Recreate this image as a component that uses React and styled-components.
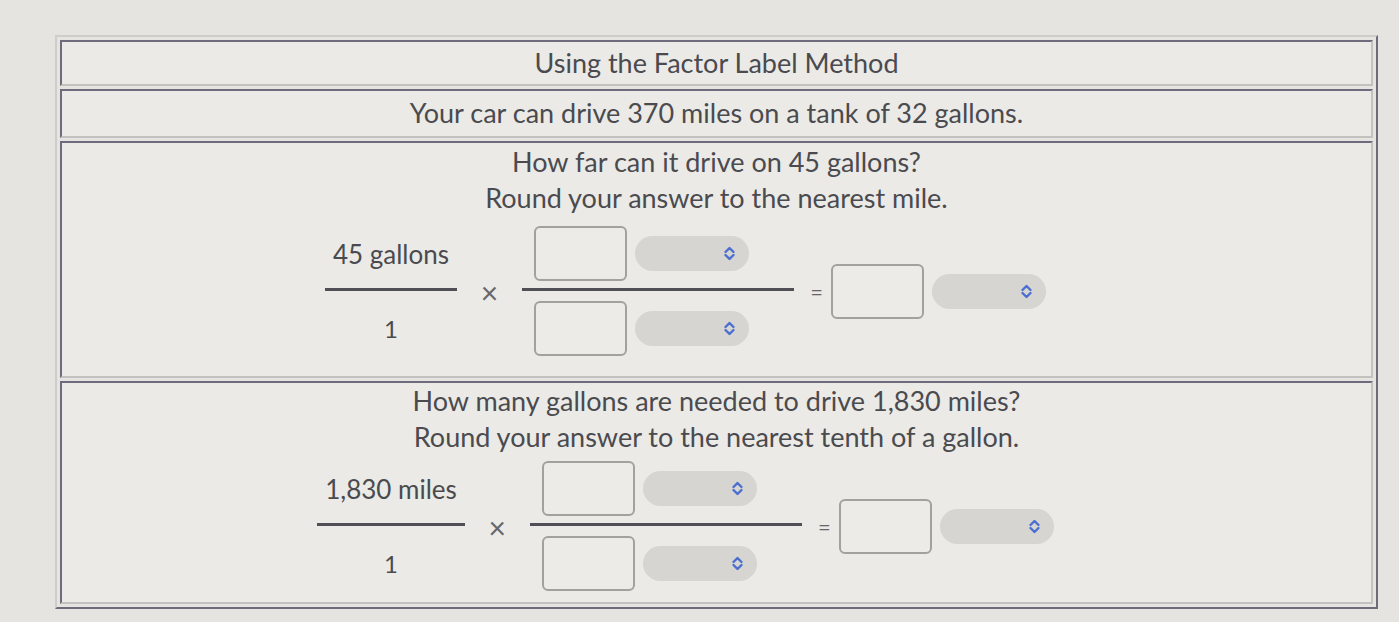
import React from "react";
import styled, { createGlobalStyle } from "styled-components";

const Global = createGlobalStyle`
  html, body { margin: 0; padding: 0; background: #e6e4e0; }
  body { font-family: Lato, "Open Sans", sans-serif; color: #4a4a4f; }
  #root { height: 622px; overflow: hidden; }
`;

const Page = styled.div`
  padding: 35px 21px 0 55px;
`;

const Table = styled.div`
  display: flex;
  flex-direction: column;
  gap: 3px;
  padding: 3px;
  border-style: solid;
  border-width: 2px;
  border-color: #cfcdc9 #6e6a78 #6e6a78 #cfcdc9;
`;

const Cell = styled.div`
  background: #ebeae6;
  border-style: solid;
  border-width: 2px;
  border-color: #6f6b7c #c4c2be #c4c2be #6f6b7c;
  display: flex;
  flex-direction: column;
  align-items: center;
  height: ${(p) => p.$h}px;
  box-sizing: border-box;
  padding-top: ${(p) => p.$pt || 0}px;
`;

const Line = styled.div`
  font-size: 27px;
  line-height: ${(p) => p.$lh || 36}px;
  text-align: center;
  white-space: nowrap;
`;

const Formula = styled.div`
  align-self: stretch;
  display: flex;
  justify-content: center;
  align-items: center;
  padding-right: 62px;
  margin-top: ${(p) => p.$mt}px;
`;

const Frac = styled.div`
  display: flex;
  flex-direction: column;
  align-items: stretch;
`;

const Part = styled.div`
  height: 55px;
  display: flex;
  align-items: center;
  justify-content: ${(p) => (p.$left ? "flex-start" : "center")};
  gap: 8px;
  padding: ${(p) => (p.$left ? "0 45px 0 12px" : "0 8px")};
  font-size: ${(p) => (p.$small ? 24 : 26)}px;
  white-space: nowrap;
`;

const Bar = styled.div`
  height: 3px;
  background: #4f4f55;
  margin: 7px 0 10px;
`;

const Op = styled.div`
  width: ${(p) => p.$w}px;
  box-sizing: border-box;
  text-align: center;
  font-size: ${(p) => p.$size}px;
  color: #66666b;
  padding: ${(p) => p.$pad};
  line-height: 1;
`;

const Box = styled.div`
  width: 93px;
  height: 55px;
  box-sizing: border-box;
  border: 2px solid #a3a19d;
  border-radius: 6px;
  background: #ecebe7;
  flex: none;
`;

const Select = styled.div`
  width: 114px;
  height: 35px;
  border-radius: 18px;
  background: #d6d5d1;
  display: flex;
  align-items: center;
  justify-content: flex-end;
  padding-right: 13px;
  box-sizing: border-box;
  flex: none;
`;

const Answer = styled.div`
  display: flex;
  align-items: center;
  gap: 8px;
`;

const Chevron = () => (
  <svg width="13" height="17" viewBox="0 0 13 17" fill="none">
    <path d="M2.5 7 L6.5 3 L10.5 7" stroke="#4a6fd0" strokeWidth="2.4" strokeLinecap="round" strokeLinejoin="round" />
    <path d="M2.5 10 L6.5 14 L10.5 10" stroke="#4a6fd0" strokeWidth="2.4" strokeLinecap="round" strokeLinejoin="round" />
  </svg>
);

const Unit = () => (
  <Select>
    <Chevron />
  </Select>
);

const Equation = ({ given, mt }) => (
  <Formula $mt={mt}>
    <Frac>
      <Part>{given}</Part>
      <Bar />
      <Part $small>1</Part>
    </Frac>
    <Op $w={65} $size={30} $pad="2px 0 0 0">×</Op>
    <Frac>
      <Part $left>
        <Box />
        <Unit />
      </Part>
      <Bar />
      <Part $left>
        <Box />
        <Unit />
      </Part>
    </Frac>
    <Op $w={37} $size={22} $pad="2px 0 0 8px">=</Op>
    <Answer>
      <Box />
      <Unit />
    </Answer>
  </Formula>
);

export default function App() {
  return (
    <>
      <Global />
      <Page>
        <Table>
          <Cell $h={46} $pt={1}>
            <Line $lh={40}>Using the Factor Label Method</Line>
          </Cell>
          <Cell $h={49} $pt={2}>
            <Line $lh={40}>Your car can drive 370 miles on a tank of 32 gallons.</Line>
          </Cell>
          <Cell $h={237} $pt={1}>
            <Line>How far can it drive on 45 gallons?</Line>
            <Line>Round your answer to the nearest mile.</Line>
            <Equation given="45 gallons" mt={10} />
          </Cell>
          <Cell $h={223} $pt={0}>
            <Line>How many gallons are needed to drive 1,830 miles?</Line>
            <Line>Round your answer to the nearest tenth of a gallon.</Line>
            <Equation given="1,830 miles" mt={6} />
          </Cell>
        </Table>
      </Page>
    </>
  );
}
